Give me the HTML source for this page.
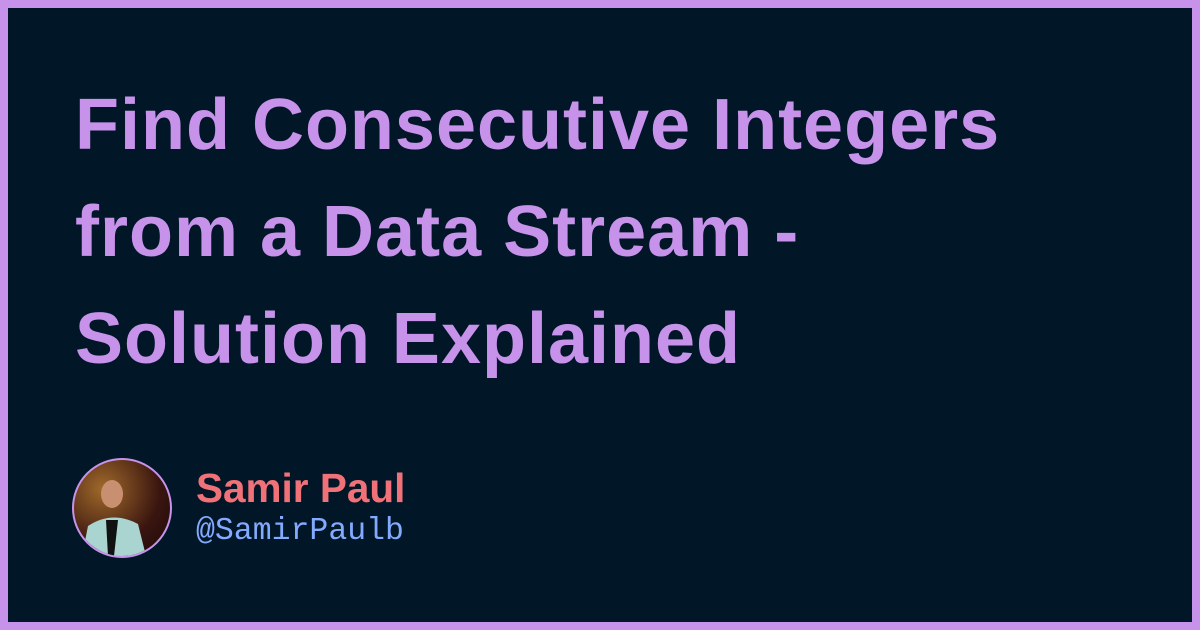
<!DOCTYPE html>
<html><head><style>
html,body{margin:0;padding:0}
body{width:1200px;height:630px;overflow:hidden;background:#c792ea;position:relative}
.in{position:absolute;left:8px;top:8px;width:1184px;height:614px;background:#011627}
h1{position:absolute;left:75px;top:72px;margin:0;font-family:"Liberation Sans",sans-serif;font-weight:bold;font-size:72px;line-height:107px;color:#c792ea;letter-spacing:1px;width:1110px;white-space:nowrap}
.av{position:absolute;left:72px;top:458px;width:96px;height:96px;border-radius:50%;border:2px solid #c792ea;overflow:hidden;background:radial-gradient(circle at 30% 30%,#a06a2a,#3a1510 60%,#1a0808)}
.name{position:absolute;left:196px;top:465px;font-family:"Liberation Sans",sans-serif;font-weight:bold;font-size:40.5px;color:#f07178;line-height:46px}
.handle{position:absolute;left:196px;top:514px;font-family:"Liberation Mono",monospace;font-size:31.5px;color:#82aaff;line-height:36px}
</style></head><body><div class="in"></div>
<h1>Find Consecutive Integers<br>from a Data Stream -<br>Solution Explained</h1>
<div class="av"><svg width="96" height="96"><ellipse cx="38" cy="34" rx="11" ry="14" fill="#c89070"/><path d="M8 96 L14 66 Q38 50 64 64 L72 96Z" fill="#a9d4d0"/><path d="M32 60 L44 60 L40 96 L34 96Z" fill="#111"/></svg></div>
<div class="name">Samir Paul</div>
<div class="handle">@SamirPaulb</div>
</body></html>
